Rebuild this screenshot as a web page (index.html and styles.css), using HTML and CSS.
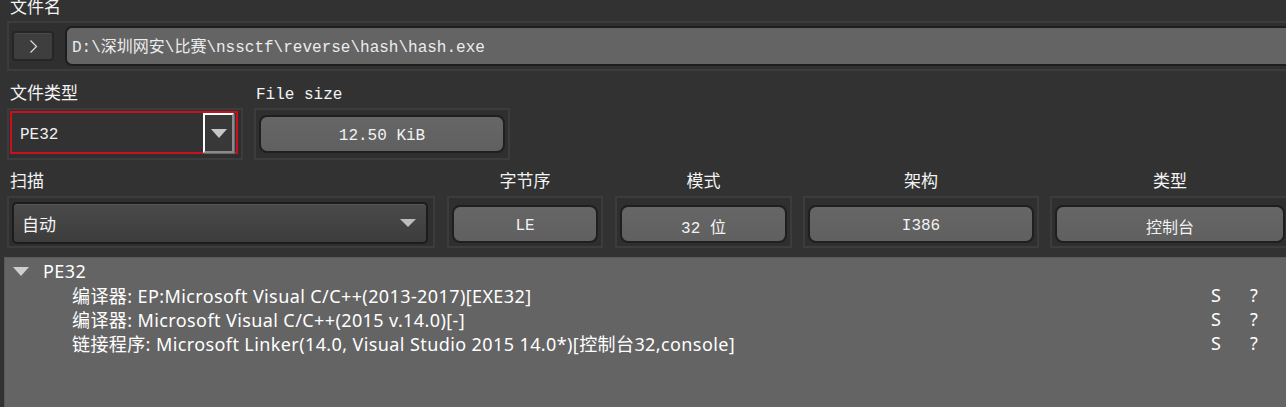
FILE: index.html
```html
<!DOCTYPE html>
<html lang="zh">
<head>
<meta charset="utf-8">
<link rel="stylesheet" href="styles.css">
</head>
<body>
<div class="app">
  <div class="label label-first">文件名</div>
  <div class="frame frame-path">
    <div class="btn-small">
      <svg width="9" height="13" viewBox="0 0 9 13"><path d="M1.5 0.5 L7.5 6.5 L1.5 12.5" fill="none" stroke="#d8dce6" stroke-width="1.2"/></svg>
    </div>
    <div class="path-field">D:\深圳网安\比赛\nssctf\reverse\hash\hash.exe</div>
  </div>

  <div class="row row2">
    <div class="group g-type">
      <div class="label">文件类型</div>
      <div class="frame frame-type">
        <div class="select-red">
          <span class="mono-text">PE32</span>
          <span class="sq-btn"><span class="tri tri-type"></span></span>
        </div>
      </div>
    </div>
    <div class="group g-size">
      <div class="label label-mono">File size</div>
      <div class="frame frame-btn frame-btn2"><div class="btn">12.50 KiB</div></div>
    </div>
  </div>

  <div class="row row3">
    <div class="group g-scan">
      <div class="label">扫描</div>
      <div class="frame frame-combo">
        <div class="combo"><span class="combo-text">自动</span><span class="tri tri-combo"></span></div>
      </div>
    </div>
    <div class="group g-endian">
      <div class="label label-center">字节序</div>
      <div class="frame frame-btn"><div class="btn">LE</div></div>
    </div>
    <div class="group g-mode">
      <div class="label label-center">模式</div>
      <div class="frame frame-btn"><div class="btn">32 位</div></div>
    </div>
    <div class="group g-arch">
      <div class="label label-center">架构</div>
      <div class="frame frame-btn"><div class="btn">I386</div></div>
    </div>
    <div class="group g-kind">
      <div class="label label-center">类型</div>
      <div class="frame frame-btn frame-last"><div class="btn">控制台</div></div>
    </div>
  </div>
</div>

<div class="tree">
  <div class="tree-row root">
    <span class="tree-tri"></span>
    <span class="tree-text">PE32</span>
  </div>
  <div class="tree-row child">
    <span class="tree-text">编译器: EP:Microsoft Visual C/C++(2013-2017)[EXE32]</span>
    <span class="col-s">S</span><span class="col-q">?</span>
  </div>
  <div class="tree-row child">
    <span class="tree-text">编译器: Microsoft Visual C/C++(2015 v.14.0)[-]</span>
    <span class="col-s">S</span><span class="col-q">?</span>
  </div>
  <div class="tree-row child">
    <span class="tree-text">链接程序: Microsoft Linker(14.0, Visual Studio 2015 14.0*)[控制台32,console]</span>
    <span class="col-s">S</span><span class="col-q">?</span>
  </div>
</div>
</body>
</html>
```

FILE: styles.css
```css
html, body {
  margin: 0;
  padding: 0;
  background: #323232;
  overflow: hidden;
  width: 1286px;
  height: 407px;
}

body {
  font-family: "Noto Sans", "Noto Sans CJK SC", sans-serif;
  color: #f2f2f2;
}

.app {
  padding-left: 7px;
}

.label {
  height: 20px;
  line-height: 20px;
  font-size: 17px;
  font-family: "Noto Sans CJK SC", sans-serif;
  padding-left: 3px;
  margin-bottom: 6px;
  color: #f4f4f4;
  white-space: nowrap;
}

.label-first {
  margin-top: -4px;
  margin-bottom: 5px;
}

.label-mono {
  font-family: "Liberation Mono", "Noto Sans CJK SC", monospace;
  font-size: 16px;
  padding-left: 2px;
  margin-top: 3px;
  margin-bottom: 3px;
}

.label-center {
  text-align: center;
  padding-left: 0;
}

.frame {
  box-sizing: border-box;
  border: 2px solid #3c3c3c;
  background: #2f2f2f;
  display: flex;
  align-items: center;
}

/* path row */
.frame-path {
  height: 50px;
  margin-right: -20px;
  padding-left: 3px;
}

.btn-small {
  box-sizing: border-box;
  width: 42px;
  height: 30px;
  border: 2px solid #262626;
  border-radius: 4px;
  background: #3e3e3e;
  box-shadow: inset 0 1px 0 #4a4a4a;
  display: flex;
  align-items: center;
  justify-content: center;
  flex: none;
}

.path-field {
  box-sizing: border-box;
  flex: 1;
  height: 40px;
  margin-left: 11px;
  background: #646464;
  border: 2px solid #1e1e1e;
  border-right: none;
  border-radius: 7px 0 0 7px;
  font-family: "Liberation Mono", "Noto Sans CJK SC", monospace;
  font-size: 16px;
  line-height: 36px;
  padding-left: 5px;
  padding-top: 2px;
  color: #ececec;
  white-space: nowrap;
}

/* rows */
.row {
  display: flex;
}

.row2 {
  margin-top: 11px;
}

.row3 {
  margin-top: 10px;
}

.group {
  flex: none;
}

.g-type { width: 236px; margin-right: 11px; }
.g-size { width: 256px; }
.g-scan { width: 428px; margin-right: 12px; }
.g-endian { width: 156px; margin-right: 12px; }
.g-mode { width: 177px; margin-right: 11px; }
.g-arch { width: 236px; margin-right: 11px; }
.g-kind { width: 240px; }

.frame-type {
  height: 52px;
  padding: 1px 3px 4px 1px;
  align-items: stretch;
}

.select-red {
  box-sizing: border-box;
  flex: 1;
  border: 2px solid #c8101e;
  background: #323232;
  display: flex;
  align-items: center;
  justify-content: space-between;
  padding-left: 8px;
}

.mono-text {
  font-family: "Liberation Mono", monospace;
  font-size: 16px;
  color: #f0f0f0;
  padding-top: 4px;
}

.sq-btn {
  box-sizing: border-box;
  width: 31px;
  height: 40px;
  margin-right: 2px;
  margin-top: 1px;
  border-top: 2px solid #ffffff;
  border-left: 2px solid #ffffff;
  border-right: 2px solid #8a8a8a;
  border-bottom: 2px solid #8a8a8a;
  box-shadow: 1px 1px 0 #6a6a6a;
  background: #383838;
  display: flex;
  align-items: center;
  justify-content: center;
}

.tri {
  width: 0;
  height: 0;
  border-style: solid;
  border-color: #c6c6c6 transparent transparent transparent;
}

.tri-type {
  border-width: 9px 8px 0 8px;
}

.frame-btn {
  height: 52px;
  padding: 5px 3px 1px 3px;
}

.frame-btn2 {
  padding: 3px 3px 3px 3px;
}

.frame-last {
  margin-right: -10px;
  padding-right: 13px;
}

.btn {
  box-sizing: border-box;
  flex: 1;
  height: 38px;
  border: 2px solid #1f1f1f;
  border-radius: 8px;
  background: linear-gradient(#666666, #606060);
  display: flex;
  align-items: center;
  justify-content: center;
  padding-top: 3px;
  font-family: "Liberation Mono", "Noto Sans CJK SC", monospace;
  font-size: 16px;
  color: #f2f2f2;
  white-space: nowrap;
}

.frame-combo {
  height: 52px;
  padding: 3px 5px 1px 3px;
}

.combo {
  box-sizing: border-box;
  flex: 1;
  height: 42px;
  border: 2px solid #1c1c1c;
  border-radius: 5px;
  background: linear-gradient(#4a4a4a, #3c3c3c);
  box-shadow: inset 0 1px 0 #575757;
  display: flex;
  align-items: center;
  justify-content: space-between;
  padding: 0 10px 0 8px;
  font-family: "Noto Sans CJK SC", sans-serif;
  font-size: 17px;
  color: #f4f4f4;
}

.combo-text {
  padding-top: 1px;
}

.tri-combo {
  border-width: 8px 8px 0 8px;
  border-color: #bcbcbc transparent transparent transparent;
}

/* tree */
.tree {
  box-sizing: border-box;
  margin-top: 9px;
  margin-left: 4px;
  height: 160px;
  background: #646464;
  border-top: 1px solid #5a5a5a;
  border-left: 1px solid #575757;
  padding-top: 1px;
  font-family: "Noto Sans", "Noto Sans CJK SC", sans-serif;
  font-size: 18px;
  letter-spacing: 0.4px;
  color: #ffffff;
}

.tree-row {
  display: flex;
  align-items: center;
  height: 24px;
  white-space: nowrap;
}

.root {
  padding-left: 8px;
}

.tree-tri {
  width: 0;
  height: 0;
  border-style: solid;
  border-width: 9px 8px 0 8px;
  border-color: #cfcfcf transparent transparent transparent;
  margin-right: 14px;
}

.child {
  padding-left: 67px;
}

.tree-text {
  flex: 1;
}

.col-s {
  width: 39px;
}

.col-q {
  width: 36px;
}
```
